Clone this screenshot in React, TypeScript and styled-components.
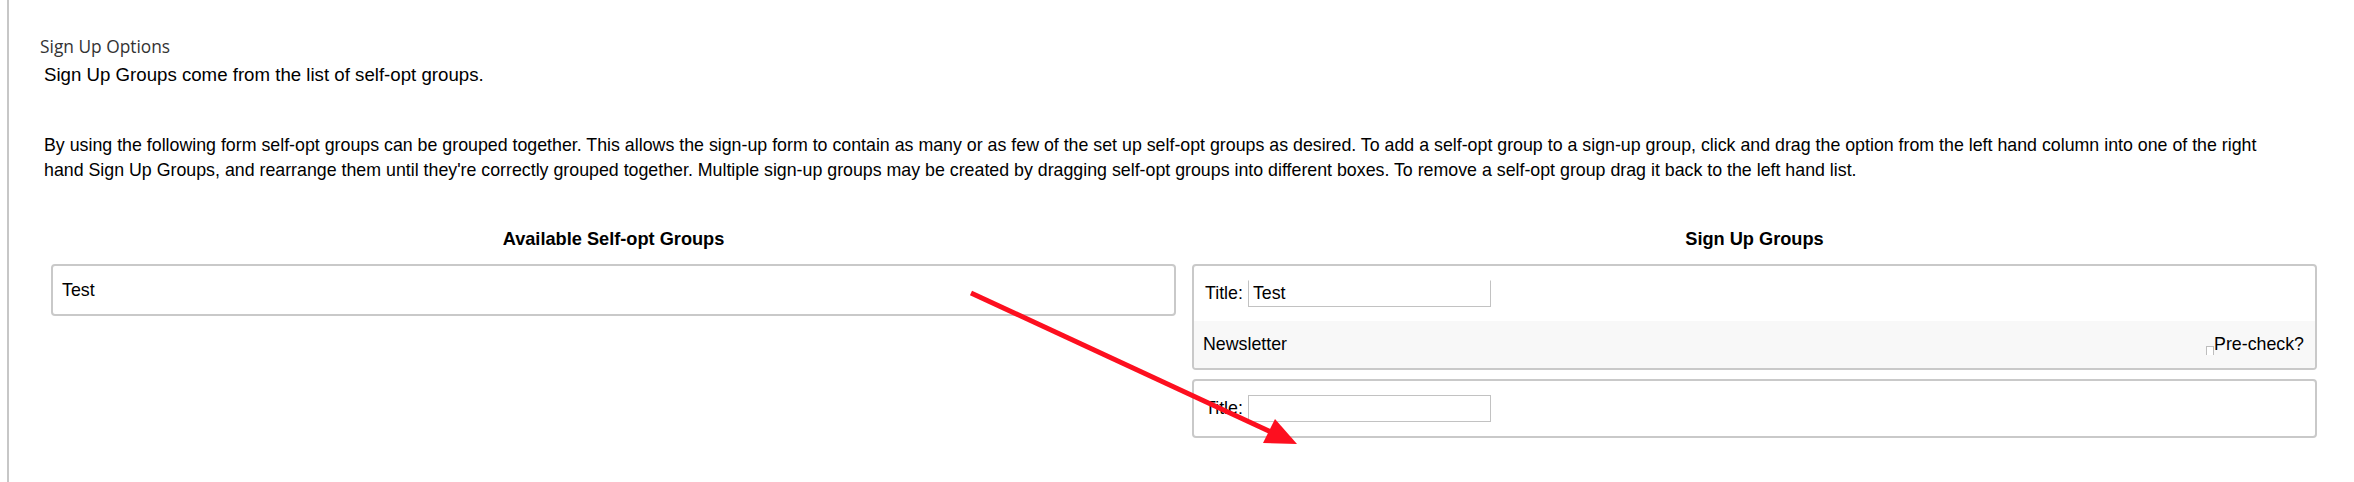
import React from 'react'
import styled, { createGlobalStyle } from 'styled-components'

const GlobalStyle = createGlobalStyle`
  html, body {
    margin: 0;
    padding: 0;
    background: #fff;
  }
  body {
    font-family: "Liberation Sans", Arial, sans-serif;
    font-size: 17.8px;
    color: #000;
  }
`

const Root = styled.div`
  position: relative;
  width: 2354px;
  height: 482px;
  overflow: hidden;
`

const Page = styled.div`
  box-sizing: border-box;
  height: 482px;
  margin-left: 7px;
  border-left: 2px solid #c7c7c7;
  padding: 34px 29px 0 31px;
`

const Heading = styled.h2`
  margin: 0;
  font-family: "Open Sans", "Liberation Sans", sans-serif;
  font-weight: 400;
  font-size: 17.33px;
  line-height: 25px;
  color: #333;
`

const Intro = styled.div`
  margin: 3px 0 0 4px;
  line-height: 25.5px;
`

const Lead = styled.div`
  font-size: 18.67px;
`

const Help = styled.p`
  margin: 45px 0 0;
  padding-right: 45px;
`

const Columns = styled.div`
  display: grid;
  grid-template-columns: 1fr 1fr;
  margin: 43.75px 0 0 3px;
`

const Column = styled.section`
  display: flex;
  flex-direction: column;
`

const ColumnTitle = styled.h3`
  margin: 0 0 11.25px;
  font-size: 18.2px;
  font-weight: 700;
  line-height: 25.5px;
  text-align: center;
`

const Box = styled.div<{ $gap?: number }>`
  margin: ${p => p.$gap ?? 0}px 8px 0;
  border: 2px solid #c9c9c9;
  border-radius: 4px;
  overflow: hidden;
  background: #fff;
`

const Item = styled.div`
  padding: 11px 9px;
  line-height: 26px;
`

const TitleRow = styled.label`
  display: flex;
  align-items: center;
  gap: 5px;
  padding: 14px 11px;
`

const TitleInput = styled.input<{ $openTop?: boolean }>`
  box-sizing: border-box;
  width: 243px;
  height: 27px;
  margin: 0;
  padding: 0 4px;
  border: 1px solid #c2c2c2;
  border-top-color: ${p => (p.$openTop ? 'transparent' : '#c2c2c2')};
  border-radius: 0;
  font-family: "Liberation Sans", Arial, sans-serif;
  font-size: 17.8px;
  color: #000;
  background: #fff;
  outline: none;
`

const OptionRow = styled.div`
  display: flex;
  justify-content: space-between;
  align-items: center;
  height: 47px;
  padding: 0 11px 0 9px;
  background: #f8f8f8;
`

const PreCheck = styled.label`
  display: flex;
  align-items: baseline;
`

const TinyCheck = styled.input`
  appearance: none;
  box-sizing: border-box;
  width: 8px;
  height: 9px;
  margin: 0;
  border: 1px solid #bdbdbd;
  border-bottom: none;
  background: #fff;
  position: relative;
  top: 5px;
`

const Overlay = styled.svg`
  position: absolute;
  top: 0;
  left: 0;
  pointer-events: none;
`

const Arrow = () => (
  <Overlay width="2354" height="482" viewBox="0 0 2354 482">
    <line x1="971" y1="293" x2="1271" y2="432" stroke="#fd0f1f" strokeWidth="5" />
    <polygon points="1297,444 1263,443 1275,419" fill="#fd0f1f" />
  </Overlay>
)

const App: React.FC = () => (
  <Root>
    <GlobalStyle />
    <Page>
      <Heading>Sign Up Options</Heading>
      <Intro>
        <Lead>Sign Up Groups come from the list of self-opt groups.</Lead>
        <Help>
          By using the following form self-opt groups can be grouped together. This allows the
          sign-up form to contain as many or as few of the set up self-opt groups as desired. To
          add a self-opt group to a sign-up group, click and drag the option from the left hand
          column into one of the right hand Sign Up Groups, and rearrange them until they're
          correctly grouped together. Multiple sign-up groups may be created by dragging self-opt
          groups into different boxes. To remove a self-opt group drag it back to the left hand
          list.
        </Help>
      </Intro>
      <Columns>
        <Column>
          <ColumnTitle>Available Self-opt Groups</ColumnTitle>
          <Box>
            <Item>Test</Item>
          </Box>
        </Column>
        <Column>
          <ColumnTitle>Sign Up Groups</ColumnTitle>
          <Box>
            <TitleRow>
              Title: <TitleInput $openTop defaultValue="Test" />
            </TitleRow>
            <OptionRow>
              <span>Newsletter</span>
              <PreCheck>
                <TinyCheck type="checkbox" />
                Pre-check?
              </PreCheck>
            </OptionRow>
          </Box>
          <Box $gap={9}>
            <TitleRow>
              Title: <TitleInput />
            </TitleRow>
          </Box>
        </Column>
      </Columns>
    </Page>
    <Arrow />
  </Root>
)

export default App
